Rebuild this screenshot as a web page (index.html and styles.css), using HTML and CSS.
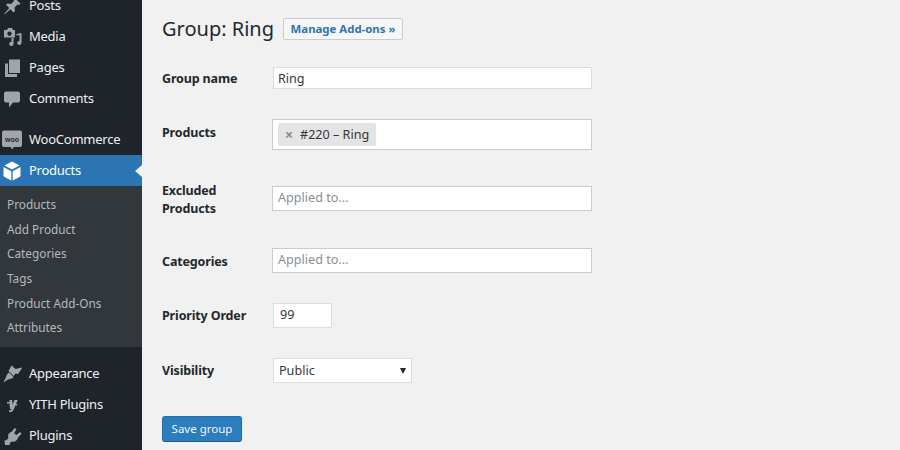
FILE: index.html
```html
<!DOCTYPE html>
<html lang="en">
<head>
<meta charset="utf-8">
<title>Group: Ring</title>
<link rel="stylesheet" href="styles.css">
</head>
<body>
<div class="page">
  <nav class="sidebar">
    <ul class="menu">
      <li class="item"><svg class="ico" viewBox="0 0 20 20"><path d="M11.500 1l7 6.500-1.500 1.500-1.500-.5-3 3 .5 3.500-1.500 1.500-3.200-3.200L3 18l-1 .5.500-1 4.700-5.500-3.200-3.200L5.500 7.500l3.500.5 3-3-.5-1.500z"/></svg><span>Posts</span></li>
      <li class="item"><svg class="ico" viewBox="0 0 20 20"><path d="M6 1h4l1 2h2v7.500H2V3h3zM7.500 4.500a2.200 2.200 0 1 0 .01 0zM14.500 7l5-1v10a2.200 2 0 1 1-2-2V8l-3 .6zM11.500 11v6a2.200 2 0 1 1-2-2v-4z"/></svg><span>Media</span></li>
      <li class="item"><svg class="ico" viewBox="0 0 20 20"><path d="M7 1.500h11v13.500H7zM3 5.500h3V16h9v3H3z"/></svg><span>Pages</span></li>
      <li class="item"><svg class="ico" viewBox="0 0 20 20"><path d="M4 2.500h12a2 2 0 0 1 2 2v7a2 2 0 0 1-2 2h-5l-4 5v-5H4a2 2 0 0 1-2-2v-7a2 2 0 0 1 2-2z"/></svg><span>Comments</span></li>
      <li class="item spaced"><svg class="ico" viewBox="0 0 20 20"><path d="M2 .500h16a2 2 0 0 1 2 2V15a2 2 0 0 1-2 2h-6l-2 2.500-1.500-2.500H2a2 2 0 0 1-2-2V2.500a2 2 0 0 1 2-2z"/><text x="10" y="11.500" class="woo-text">woo</text></svg><span>WooCommerce</span></li>
      <li class="item current"><svg class="ico" viewBox="0 0 20 20"><path d="M10 .500l7.500 4L10 8.500l-7.500-4zM1.500 6l7.800 4.200V19.500L2.500 16a2 2 0 0 1-1-1.500zM18.500 6v8.500a2 2 0 0 1-1 1.500l-6.800 3.500v-9.300z"/></svg><span>Products</span></li>
    </ul>
    <ul class="submenu">
      <li>Products</li>
      <li>Add Product</li>
      <li>Categories</li>
      <li>Tags</li>
      <li>Product Add-Ons</li>
      <li>Attributes</li>
    </ul>
    <ul class="menu lower">
      <li class="item"><svg class="ico" viewBox="0 0 20 20"><path d="M9.500 1.500l4 3.500 7-1.500-4.500 6.500-2.500-.5-2 2.500-5-5zM7 8.500l4.500 4.500-1.500 1.500-4 1-4.500 3 2.500-5.500 1-2.500z"/></svg><span>Appearance</span></li>
      <li class="item"><svg class="ico" viewBox="0 0 20 20"><path d="M7.500 5h2.700l.3 4.500L12.500 5h3.200l-4 9.500c-.8 2-2.500 3-4.700 2.500l.5-2c1 .3 1.700 0 2.200-1H8c-.4-3-.5-6-.5-9zM5 7h2.400v1.400H5zM13 9h2.300v1.400H13z"/></svg><span>YITH Plugins</span></li>
      <li class="item"><svg class="ico" viewBox="0 0 20 20"><path d="M12.500 2l2 1.200-2.500 4 2.500 1.800 3.500-3 1.500 1.800-3.500 3.700c-.5 3-3.500 5-6.500 4L7.500 17.500 8 19H3l-.5-5 1.500.5 2.500-2.500c-1.200-3 .5-5.500 3-6z"/></svg><span>Plugins</span></li>
    </ul>
  </nav>
  <main class="content">
    <header class="title-row">
      <h1>Group: Ring</h1>
      <a class="manage" href="#">Manage Add-ons »</a>
    </header>
    <form class="form">
      <div class="row row-name">
        <label>Group name</label>
        <div class="field text-input">Ring</div>
      </div>
      <div class="row row-products">
        <label>Products</label>
        <div class="field tags"><span class="tag"><span class="x">×</span>#220 – Ring</span></div>
      </div>
      <div class="row row-excluded">
        <label>Excluded Products</label>
        <div class="field placeholder">Applied to...</div>
      </div>
      <div class="row row-categories">
        <label>Categories</label>
        <div class="field placeholder">Applied to...</div>
      </div>
      <div class="row row-priority">
        <label>Priority Order</label>
        <div class="field number">99</div>
      </div>
      <div class="row row-visibility">
        <label>Visibility</label>
        <div class="field select">Public<span class="arrow"></span></div>
      </div>
      <button class="save" type="button">Save group</button>
    </form>
  </main>
</div>
</body>
</html>
```
FILE: styles.css
```css
* { box-sizing: border-box; }
html, body { margin: 0; height: 450px; overflow: hidden; }
body { background: #f1f1f1; font-family: "Noto Sans", "Open Sans", sans-serif; color: #32373c; }
ul { list-style: none; margin: 0; padding: 0; }
.page { display: flex; height: 450px; overflow: hidden; }

.sidebar { width: 142px; flex: none; background: #1f242b; margin-top: -10px; height: 470px; }
.item { height: 31px; display: flex; align-items: center; color: #eef0f1; font-size: 13px; letter-spacing: -.25px; line-height: 29px; position: relative; }
.item span { margin-left: 7px; padding-bottom: 1px; }
.ico { width: 20px; height: 20px; margin-left: 2px; fill: #a0a5aa; flex: none; }
.spaced { margin-top: 10px; }
.woo-text { font-size: 7px; letter-spacing: 0; fill: #23282d; text-anchor: middle; font-family: "Liberation Sans", sans-serif; font-weight: 700; }
.current { background: #2b75b5; color: #fff; }
.current .ico { fill: #fff; }
.current::after { content: ""; position: absolute; right: 0; top: 10px; border: 6px solid transparent; border-right: 7px solid #f1f1f1; border-left: 0; }
.submenu { background: #32373c; height: 161px; padding-top: 6px; }
.submenu li { height: 24.700px; line-height: 24.700px; padding-left: 7px; font-size: 11.800px; color: #b4b9be; }
.lower { margin-top: 11px; }

.content { flex: 1; padding: 17px 0 0 20px; }
.title-row { display: flex; align-items: center; height: 24px; }
h1 { margin: 0 9px 0 0; font-size: 20px; font-weight: 400; color: #23282d; line-height: 24px; white-space: nowrap; }
.manage { display: block; width: 120px; height: 22px; line-height: 20px; text-align: center; background: #f7f7f7; border: 1px solid #ccc; border-radius: 2px; color: #2b75b5; font-size: 11.400px; font-weight: 700; text-decoration: none; white-space: nowrap; }

.form { display: flex; flex-direction: column; align-items: flex-start; }
.row { display: flex; width: 430px; align-items: center; }
.row label { width: 110px; flex: none; font-size: 12.500px; letter-spacing: -.15px; font-weight: 700; color: #23282d; line-height: 18px; }
.field { background: #fff; border: 1px solid #ddd; font-size: 12.600px; color: #32373c; }

.row-name { margin-top: 26px; height: 22px; }
.row-name label { padding-top: 1px; }
.text-input { width: 319px; height: 22px; line-height: 21px; padding-left: 4px; margin-left: 1px; }
.row-products { margin-top: 30px; height: 31px; }
.row-products label { align-self: flex-start; margin-top: 5px; }
.tags { width: 320px; height: 31px; padding: 3px 5px; border-color: #ccc; }
.tag { display: inline-flex; align-items: center; height: 23px; background: #e4e4e4; border-radius: 2px; padding: 0 7px; font-size: 12.600px; white-space: nowrap; }
.x { color: #888; font-weight: 700; margin-right: 7px; font-size: 14px; }
.row-excluded { margin-top: 30px; height: 36px; }
.row-excluded label { width: 70px; margin-right: 40px; padding-top: 3px; }
.placeholder { width: 320px; height: 25px; line-height: 21px; padding-left: 5px; color: #8a8f94; border-color: #ccc; }
.row-categories { margin-top: 32px; height: 25px; }
.row-categories label { padding-top: 2px; }
.row-priority { margin-top: 30px; height: 25px; }
.number { width: 59px; height: 25px; line-height: 22px; padding-left: 6px; margin-left: 1px; }
.row-visibility { margin-top: 30px; height: 25px; }
.select { width: 139px; height: 25px; line-height: 23px; padding-left: 5px; margin-left: 1px; position: relative; }
.arrow { position: absolute; right: 5px; top: 9px; border: 3.500px solid transparent; border-top: 6px solid #23282d; border-bottom: 0; }
.save { margin-top: 33px; width: 80px; height: 26px; padding: 0 0 2px; background: #2b7dbd; border: 1px solid #2270a8; border-bottom-color: #1d5f90; border-radius: 3px; color: #f1f6fa; font: 11.500px "Noto Sans", sans-serif; }
```
